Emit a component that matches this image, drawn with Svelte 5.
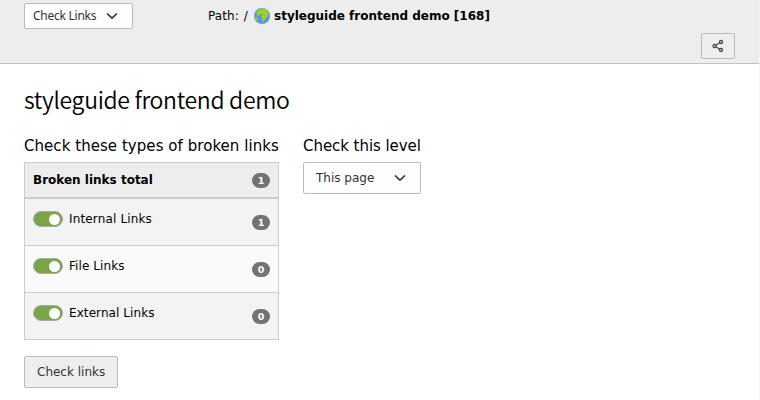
<script>
  const types = [
    { label: 'Internal Links', count: 1, w: 'internal' },
    { label: 'File Links', count: 0, w: 'file' },
    { label: 'External Links', count: 0, w: 'external' }
  ];
</script>

{#snippet chevron()}
  <svg class="chevron" width="12" height="8" viewBox="0 0 12 8"><path d="M1 1.5 6 6.2 11 1.5" fill="none" stroke="#333" stroke-width="1.6" /></svg>
{/snippet}

<div class="module">
  <header>
    <div class="bar">
      <button class="select small"><span class="t-select">Check Links</span>{@render chevron()}</button>
      <div class="path">
        <span class="t-path">Path: /</span>
        <svg width="16" height="16" viewBox="0 0 16 16">
          <circle cx="8" cy="8" r="8" fill="#5599f0" />
          <path d="M3.6 2.6 6 1.2 9 .6 12.6 2 14 4.4 14.4 7 12.6 9.4 11 11.6 9.6 13.8 8.2 13 8.4 10.6 7 8.6 9 7 8.6 5.6 6.6 6 5.4 7.6 3.4 7.4 2.4 5.4Z" fill="#a4d012" />
          <path d="M1 8.6 3 9.6 4 11.6 3.4 13.2 1.6 11.2Z" fill="#a4d012" />
        </svg>
        <b class="t-site">styleguide frontend demo [168]</b>
      </div>
    </div>
    <div class="actions">
      <button class="share" aria-label="Share">
        <svg width="12" height="14" viewBox="0 0 12 14" fill="#bbb" stroke="#444" stroke-width="1.1">
          <path d="M2.5 7 8.7 3.2M2.5 7 8.7 10.8" fill="none" />
          <circle cx="2.5" cy="7" r="1.6" /><circle cx="9" cy="3" r="1.6" /><circle cx="9" cy="11" r="1.6" />
        </svg>
      </button>
    </div>
  </header>

  <main>
    <h1><span class="t-title">styleguide frontend demo</span></h1>
    <div class="columns">
      <section class="types">
        <h2><span class="t-types">Check these types of broken links</span></h2>
        <div class="table">
          <div class="row total"><b class="t-total">Broken links total</b><span class="badge">1</span></div>
          {#each types as type}
            <div class="row item">
              <span class="switch"><i></i></span>
              <span class="label {type.w}">{type.label}</span>
              <span class="badge">{type.count}</span>
            </div>
          {/each}
        </div>
      </section>
      <section class="level">
        <h2><span class="t-level">Check this level</span></h2>
        <button class="select large"><span class="t-page">This page</span>{@render chevron()}</button>
      </section>
    </div>
    <button class="check"><span class="t-check">Check links</span></button>
  </main>
</div>

<style>
  .module {
    box-sizing: border-box;
    width: 760px;
    height: 400px;
    overflow: hidden;
    border-right: 1px solid #f3f3f3;
    background: #fff;
    color: #000;
    font: 12px/18px Verdana, 'DejaVu Sans', sans-serif;
  }
  .module * { box-sizing: border-box; }
  span, b { white-space: nowrap; }
  header {
    height: 64px;
    padding: 3px 24px 0;
    background: #ededed;
    border-bottom: 1px solid #c3c3c3;
  }
  .bar { display: flex; height: 30px; }
  button {
    display: flex;
    align-items: center;
    margin: 0;
    border: 1px solid #bbb;
    border-radius: 2px;
    color: #333;
    font: inherit;
  }
  .select { background: #fefefe; justify-content: space-between; }
  .small { width: 109px; height: 26px; padding: 0 14px 0 8px; }
  .t-select { font-family: 'Noto Sans', sans-serif; font-size: 12px; letter-spacing: -0.25px; }
  .path { display: flex; height: 26px; align-items: center; margin-left: 75px; }
  .path svg { margin: 0 4px 0 4px; }
  .t-path { width: 42px; word-spacing: 1px; letter-spacing: 0.1px; }
  .actions { display: flex; justify-content: flex-end; }
  .share { width: 34px; height: 26px; padding: 0; justify-content: center; background: #eee; }
  main { padding: 19px 24px 0; }
  h1 {
    margin: 0;
    height: 53px;
    font: 350 23px/32px 'Source Sans Pro', 'Noto Sans CJK SC', sans-serif;
    letter-spacing: -0.32px;
  }
  .columns { display: flex; gap: 24px; }
  h2 { margin: 0; height: 26px; font-size: 15px; line-height: 20px; font-weight: 400; }
  .t-types { letter-spacing: 0.05px; }
  .t-level { letter-spacing: -0.05px; }
  .types { width: 255px; }
  .table { border: 1px solid #ccc; }
  .row { display: flex; padding: 0 8px; }
  .total { height: 36px; align-items: center; background: #ededed; border-bottom: 2px solid #ccc; }
  .badge {
    width: 18px;
    height: 15px;
    margin-left: auto;
    border-radius: 8px;
    background: #737373;
    color: #fff;
    font-size: 9.5px;
    font-weight: 700;
    line-height: 15px;
    text-align: center;
  }
  .item { height: 47px; padding-top: 11px; background: #f3f3f3; border-bottom: 1px solid #ccc; }
  .item:nth-child(3) { background: #fafafa; }
  .item:last-child { height: 46px; border-bottom: 0; }
  .item .badge { margin-top: 5px; }
  .internal { letter-spacing: 0.15px; }
  .file, .external { letter-spacing: 0.08px; }
  .switch {
    display: flex;
    justify-content: flex-end;
    width: 30px;
    height: 16px;
    margin: 1px 6px 0 0;
    padding: 1.5px 2px;
    border: 1px solid #aaa;
    border-radius: 8px;
    background: #79a548;
  }
  .switch i { width: 11px; height: 11px; border-radius: 50%; background: #fff; }
  .large { width: 118px; height: 32px; padding: 0 14px 0 12px; }
  .check { width: 94px; height: 32px; margin-top: 16px; padding: 0 0 0 12px; background: #eee; }
</style>
